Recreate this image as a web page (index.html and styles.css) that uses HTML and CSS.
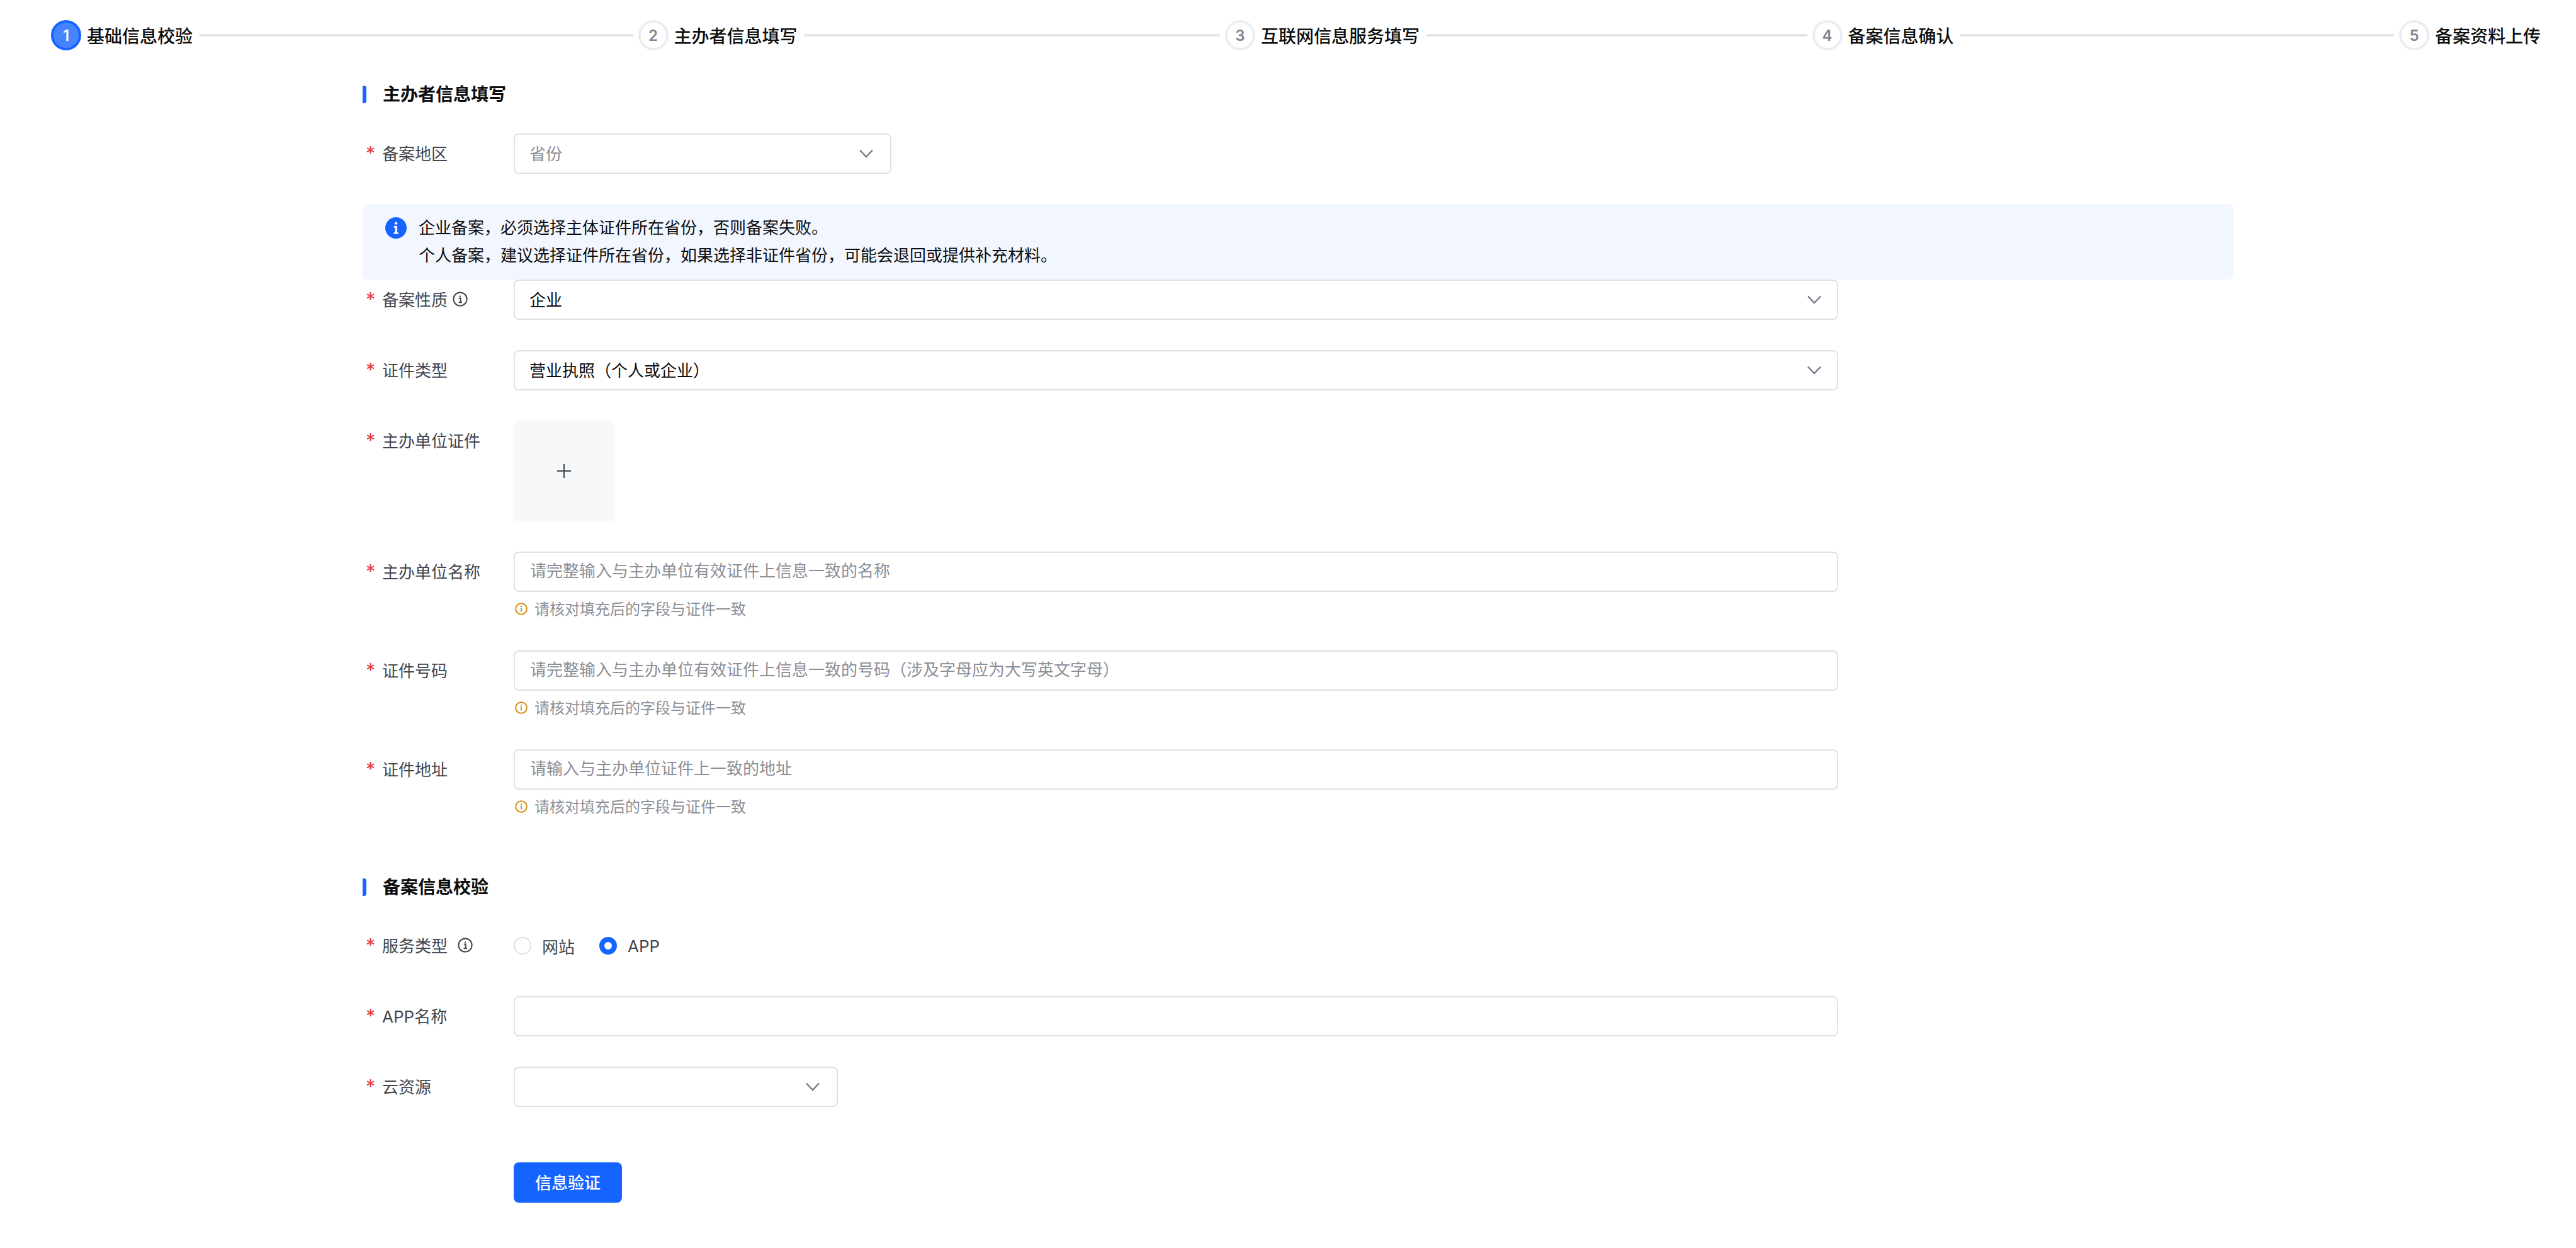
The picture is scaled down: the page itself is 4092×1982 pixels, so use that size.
FILE: index.html
```html
<!DOCTYPE html>
<html lang="zh-CN">
<head>
  <meta charset="UTF-8" />
  <meta name="viewport" content="width=device-width, initial-scale=1.0"/>
  <title>基础信息校验</title>
  <link rel="stylesheet" href="styles.css">
</head>
<body>

<!-- Steps -->
<div class="steps">
  <div class="step active">
    <span class="step-num">1</span>
    <span class="step-title">基础信息校验</span>
    <span class="step-line"></span>
  </div>
  <div class="step">
    <span class="step-num">2</span>
    <span class="step-title">主办者信息填写</span>
    <span class="step-line"></span>
  </div>
  <div class="step">
    <span class="step-num">3</span>
    <span class="step-title">互联网信息服务填写</span>
    <span class="step-line"></span>
  </div>
  <div class="step">
    <span class="step-num">4</span>
    <span class="step-title">备案信息确认</span>
    <span class="step-line"></span>
  </div>
  <div class="step last">
    <span class="step-num">5</span>
    <span class="step-title">备案资料上传</span>
  </div>
</div>

<div class="content">
  <h2 class="section-title">主办者信息填写</h2>

  <div class="form-item">
    <label class="form-label"><span class="star">*</span>备案地区</label>
    <div class="form-control">
      <div class="select narrow">
        <span class="placeholder">省份</span>
        <svg class="chevron" viewBox="0 0 22 14"><path d="M1 1.5 11 12 21 1.5"/></svg>
      </div>
    </div>
  </div>

  <div class="alert">
    <svg class="alert-icon" viewBox="0 0 34 34">
      <circle cx="17" cy="17" r="17" fill="#1664ff"/>
      <circle cx="17" cy="9.6" r="2.2" fill="#fff"/>
      <path d="M13.6 14h5.4v10.2h2v2.4h-7.6v-2.4h2.2v-7.8h-2z" fill="#fff"/>
    </svg>
    <div class="alert-text">
      <div>企业备案，必须选择主体证件所在省份，否则备案失败。</div>
      <div>个人备案，建议选择证件所在省份，如果选择非证件省份，可能会退回或提供补充材料。</div>
    </div>
  </div>

  <div class="form-item">
    <label class="form-label"><span class="star">*</span>备案性质
      <svg class="help-icon" viewBox="0 0 24 24"><circle cx="12" cy="12" r="10.6"/><path d="M9.8 10.6H12.6V17M9.6 17.2H15M12 6.4v2"/></svg>
    </label>
    <div class="form-control">
      <div class="select">
        <span>企业</span>
        <svg class="chevron" viewBox="0 0 22 14"><path d="M1 1.5 11 12 21 1.5"/></svg>
      </div>
    </div>
  </div>

  <div class="form-item">
    <label class="form-label"><span class="star">*</span>证件类型</label>
    <div class="form-control">
      <div class="select">
        <span>营业执照（个人或企业）</span>
        <svg class="chevron" viewBox="0 0 22 14"><path d="M1 1.5 11 12 21 1.5"/></svg>
      </div>
    </div>
  </div>

  <div class="form-item">
    <label class="form-label"><span class="star">*</span>主办单位证件</label>
    <div class="form-control">
      <div class="upload">
        <svg class="plus" viewBox="0 0 22 22"><path d="M11 0v22M0 11h22"/></svg>
      </div>
    </div>
  </div>

  <div class="form-item">
    <label class="form-label"><span class="star">*</span>主办单位名称</label>
    <div class="form-control">
      <input class="input" type="text" placeholder="请完整输入与主办单位有效证件上信息一致的名称">
      <div class="hint">
        <svg class="hint-icon" viewBox="0 0 20 20"><circle cx="10" cy="10" r="8.8"/><path d="M10 8.6v6M10 5v2"/></svg>
        请核对填充后的字段与证件一致
      </div>
    </div>
  </div>

  <div class="form-item">
    <label class="form-label"><span class="star">*</span>证件号码</label>
    <div class="form-control">
      <input class="input" type="text" placeholder="请完整输入与主办单位有效证件上信息一致的号码（涉及字母应为大写英文字母）">
      <div class="hint">
        <svg class="hint-icon" viewBox="0 0 20 20"><circle cx="10" cy="10" r="8.8"/><path d="M10 8.6v6M10 5v2"/></svg>
        请核对填充后的字段与证件一致
      </div>
    </div>
  </div>

  <div class="form-item">
    <label class="form-label"><span class="star">*</span>证件地址</label>
    <div class="form-control">
      <input class="input" type="text" placeholder="请输入与主办单位证件上一致的地址">
      <div class="hint">
        <svg class="hint-icon" viewBox="0 0 20 20"><circle cx="10" cy="10" r="8.8"/><path d="M10 8.6v6M10 5v2"/></svg>
        请核对填充后的字段与证件一致
      </div>
    </div>
  </div>

  <h2 class="section-title second">备案信息校验</h2>

  <div class="form-item">
    <label class="form-label"><span class="star">*</span>服务类型
      <svg class="help-icon wide" viewBox="0 0 24 24"><circle cx="12" cy="12" r="10.6"/><path d="M9.8 10.6H12.6V17M9.6 17.2H15M12 6.4v2"/></svg>
    </label>
    <div class="form-control radios">
      <span class="radio"><span class="radio-dot"></span>网站</span>
      <span class="radio checked"><span class="radio-dot"></span>APP</span>
    </div>
  </div>

  <div class="form-item">
    <label class="form-label"><span class="star">*</span>APP名称</label>
    <div class="form-control">
      <input class="input" type="text">
    </div>
  </div>

  <div class="form-item">
    <label class="form-label"><span class="star">*</span>云资源</label>
    <div class="form-control">
      <div class="select medium">
        <span></span>
        <svg class="chevron" viewBox="0 0 22 14"><path d="M1 1.5 11 12 21 1.5"/></svg>
      </div>
    </div>
  </div>

  <div class="form-actions">
    <button class="btn-primary" type="button">信息验证</button>
  </div>
</div>

</body>
</html>
```

FILE: styles.css
```css
* { box-sizing: border-box; }
body {
  margin: 0;
  font-family: Inter, 'Noto Sans CJK SC', sans-serif;
  font-size: 26px;
  background: #fff;
  color: #0c0d0e;
}

/* steps */
.steps {
  display: flex;
  padding: 32px 56px 0 81px;
}

.step {
  flex: 1;
  display: flex;
  align-items: center;
  height: 48px;
}

.step.last {
  flex: none;
}

.step-num {
  flex: none;
  display: flex;
  align-items: center;
  justify-content: center;
  width: 48px;
  height: 48px;
  margin-right: 9px;
  border: 4px solid #eaedf1;
  border-radius: 50%;
  font-size: 24px;
  font-weight: 600;
  color: #80858f;
}

.step.active .step-num {
  background: #4583ff;
  border-color: #1664ff;
  color: #fff;
}

.step-title {
  font-size: 28px;
  font-weight: 500;
}

.step-line {
  flex: 1;
  height: 4px;
  margin: 0 8px 0 10px;
  background: #e3e5ea;
}

/* form */
.content {
  width: 2972px;
  margin-left: 576px;
  padding-top: 56px;
}

.section-title {
  position: relative;
  margin: 0 0 48px;
  padding-left: 32px;
  font-size: 28px;
  line-height: 28px;
  font-weight: 600;
}

.section-title::before {
  content: "";
  position: absolute;
  left: 0;
  top: 0;
  width: 6px;
  height: 28px;
  background: #1664ff;
  border-radius: 0 4px 4px 0;
}

.section-title.second {
  margin: 96px 0 47px;
}

.form-item {
  display: flex;
  margin-bottom: 48px;
}

.form-label {
  flex: none;
  display: flex;
  align-items: center;
  width: 240px;
  height: 64px;
  padding: 0 0 3px 6px;
  color: #42464e;
}

.star {
  width: 26px;
  margin-left: -1px;
  color: #e63f3f;
  font-size: 30px;
  line-height: 26px;
}

.help-icon {
  width: 24px;
  height: 24px;
  margin-left: 8px;
  fill: none;
  stroke: #42464e;
  stroke-width: 2;
}

.help-icon.wide {
  margin-left: 16px;
}

.form-control {
  width: 2104px;
}

.select, .input {
  display: flex;
  align-items: center;
  justify-content: space-between;
  width: 100%;
  height: 64px;
  padding: 0 23px 0;
  border: 2px solid #dde2e9;
  border-radius: 8px;
  background: #fff;
  font-family: inherit;
  font-size: 26px;
  color: #0c0d0e;
  outline: none;
}

.select > span {
  padding-bottom: 3px;
}

.input {
  padding: 0 24px 3px;
}

.select.narrow { width: 600px; }
.select.medium { width: 515px; }

.placeholder, .input::placeholder {
  color: #8b8f97;
  opacity: 1;
}

.chevron {
  flex: none;
  width: 22px;
  height: 14px;
  margin-right: 2px;
  fill: none;
  stroke: #737a87;
  stroke-width: 2.4;
}

.select.narrow .chevron, .select.medium .chevron {
  margin-right: 4px;
}

.upload {
  display: flex;
  align-items: center;
  justify-content: center;
  width: 160px;
  height: 160px;
  background: #f6f8fa;
  border-radius: 4px;
}

.plus {
  width: 22px;
  height: 22px;
  fill: none;
  stroke: #42464e;
  stroke-width: 2;
}

.hint {
  display: flex;
  align-items: center;
  height: 36px;
  margin-top: 9px;
  padding-bottom: 3px;
  font-size: 24px;
  color: #8b8f97;
}

.hint-icon {
  width: 20px;
  height: 20px;
  margin: 3px 11px 0 2px;
  fill: none;
  stroke: #d18f0f;
  stroke-width: 2;
}

.alert {
  display: flex;
  height: 120px;
  padding: 16px 36px 0;
  background: #f2f6fe;
  border-radius: 8px;
}

.alert-icon {
  flex: none;
  width: 34px;
  height: 34px;
  margin: 5px 19px 0 0;
}

.alert-text {
  line-height: 44px;
}

.radios {
  display: flex;
  align-items: center;
  gap: 39px;
  height: 64px;
}

.radio {
  display: flex;
  align-items: center;
  color: #42464e;
}

.radio-dot {
  width: 28px;
  height: 28px;
  margin-right: 17px;
  border: 2px solid #dde2e9;
  border-radius: 50%;
}

.radio.checked .radio-dot {
  border: 8px solid #1664ff;
}

.form-actions {
  margin: 88px 0 0 240px;
}

.btn-primary {
  width: 172px;
  height: 64px;
  padding: 0 0 3px;
  border: none;
  border-radius: 8px;
  background: #1664ff;
  color: #fff;
  font-family: inherit;
  font-size: 26px;
  font-weight: 500;
}
```
